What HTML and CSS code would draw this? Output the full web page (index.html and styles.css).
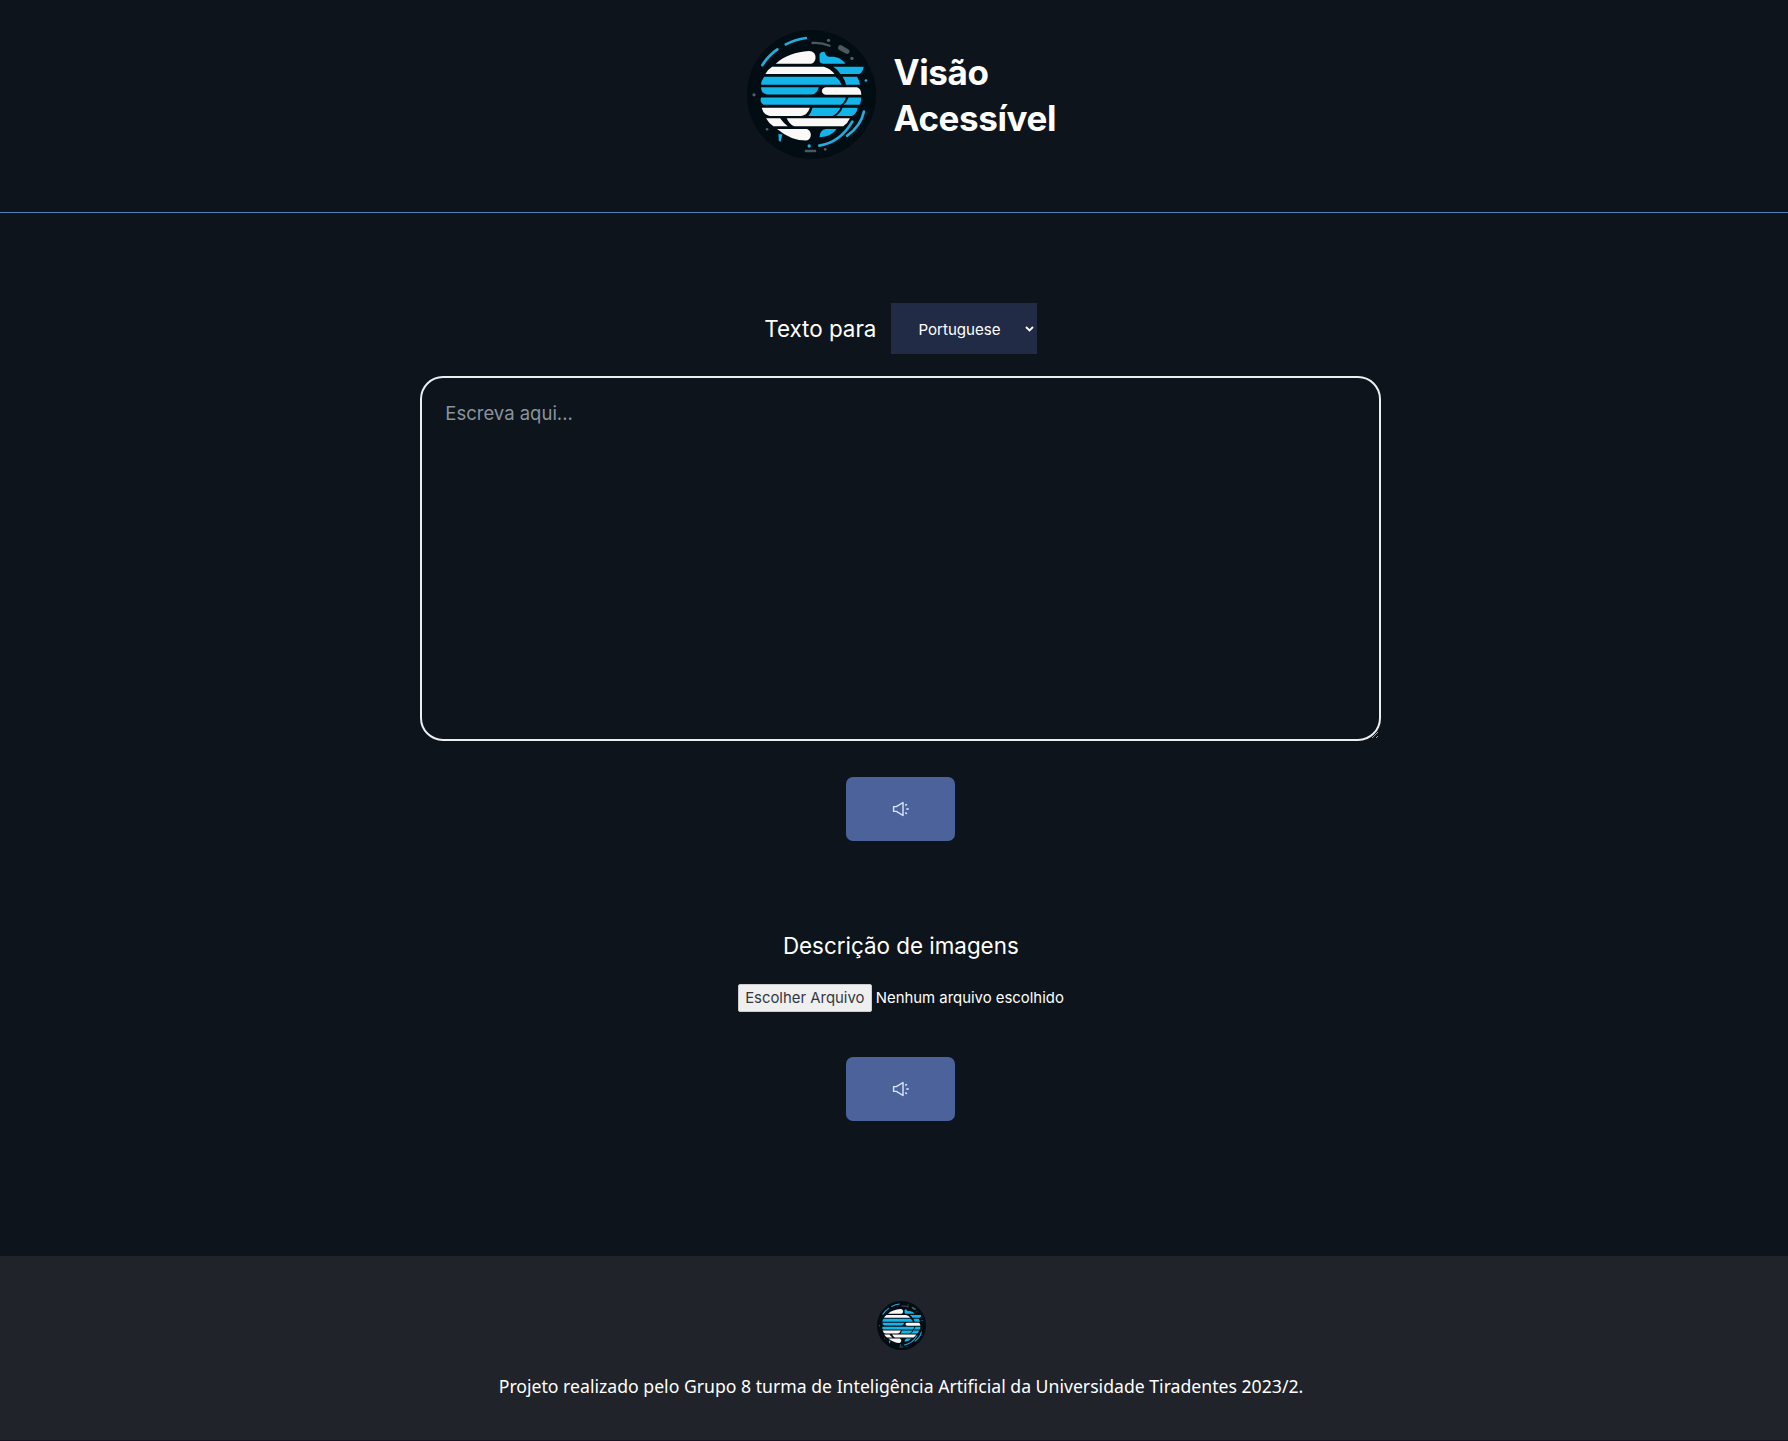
FILE: index.html
```html
<!DOCTYPE html>
<html lang="pt-BR">
<head>
<meta charset="utf-8">
<title>Visão Acessível</title>
<link rel="stylesheet" href="styles.css">
</head>
<body>
<svg class="defs" aria-hidden="true">
  <symbol id="logo" viewBox="23 31 386 386">
    <circle cx="216" cy="224" r="193" fill="#010d13"/>
    <g fill="#fbf9f7">
      <path d="M109 132C133 109 171 96 208 94C222 94 228 103 228 113C228 125 220 132 211 132Z"/>
      <path d="M78 163Q85 149 98 141H253Q273 147 285 163Z"/>
      <path d="M258 202H352Q365 206 365 225H258Q247 222 247 213Q248 204 258 202Z"/>
      <path d="M67 264H211Q204 287 184 288H91Q72 284 67 264Z"/>
      <path d="M80 295H122Q132 309 145 319H102Q88 310 80 295Z"/>
      <path d="M142 295H331Q324 311 311 319H164Q149 312 142 295Z"/>
      <path d="M113 327H203Q214 333 214 345Q213 359 200 362Q155 362 113 327Z"/>
    </g>
    <g fill="#13b5e9">
      <path d="M240 103Q247 94 255 97Q259 111 270 111C291 109 307 117 318 132H251Q239 131 240 121Z"/>
      <path d="M281 141H372Q370 158 359 163H303Q295 150 281 141Z"/>
      <path d="M75 171H288Q301 180 306 195H65Q66 180 75 171Z"/>
      <path d="M309 171H352Q359 182 361 195H319Q317 182 309 171Z"/>
      <path d="M65 202H238Q233 222 216 224H82Q65 220 65 202Z"/>
      <path d="M65 233H319Q314 249 303 255H73Q60 248 65 233Z"/>
      <path d="M327 233H364Q365 249 359 255H312Q322 246 327 233Z"/>
      <path d="M219 264H303Q294 281 279 288H207Q216 278 219 264Z"/>
      <path d="M309 264H354Q351 283 337 288H289Q303 280 309 264Z"/>
      <path d="M240 352Q241 329 259 327H291Q277 349 240 352Z"/>
      <path d="M117 342L129 344L123 366L118 361Z"/>
      <circle cx="209" cy="378" r="5"/><circle cx="379" cy="182" r="4"/>
    </g>
    <g fill="none" stroke="#21aede" stroke-width="8" stroke-linecap="round">
      <path d="M69 136Q86 108 114 89M139 74Q168 59 199 55M239 377Q302 367 338 305M323 347Q364 318 373 275"/>
    </g>
    <g fill="none" stroke="#4b585e" stroke-linecap="round">
      <path stroke-width="7" d="M219 70Q246 68 270 78M199 393H227"/>
      <path stroke-width="15" d="M303 84L322 95"/>
    </g>
    <g fill="#4b6068"><circle cx="267" cy="62" r="5"/><circle cx="337" cy="116" r="5"/><circle cx="44" cy="225" r="5"/><circle cx="83" cy="328" r="4"/><circle cx="257" cy="388" r="4"/></g>
  </symbol>
  <symbol id="horn" viewBox="0 0 18 16">
    <path d="M1.6 5.6H4.4L11 1.5V14.5L4.4 10.4H1.6Z" fill="none" stroke="#dce5ff" stroke-width="1.4" stroke-linejoin="round"/>
    <path d="M13.8 4L14.4 3.6M14.8 8H16.2M13.8 12L14.4 12.4" fill="none" stroke="#dce5ff" stroke-width="1.6" stroke-linecap="round"/>
  </symbol>
</svg>
<header class="header">
  <svg class="header-logo"><use href="#logo"/></svg>
  <h1 class="brand"><span class="brand-top">Visão</span><br><span class="brand-bottom">Acessível</span></h1>
</header>
<main class="main">
  <div class="language">
    <label class="label" for="lang">Texto para</label>
    <div class="select-wrap">
      <select class="select" id="lang"><option>Portuguese</option></select>
      <svg class="chevron" viewBox="0 0 9 6"><path d="M1 1L4.5 4.5L8 1" fill="none" stroke="#fff" stroke-width="1.8"/></svg>
    </div>
  </div>
  <textarea class="textarea" placeholder="Escreva aqui..."></textarea>
  <button class="speak" aria-label="Ouvir texto"><svg class="horn"><use href="#horn"/></svg></button>
  <h2 class="subtitle">Descrição de imagens</h2>
  <div class="file">
    <button class="file-button"><span class="file-label">Escolher Arquivo</span></button>
    <span class="file-name">Nenhum arquivo escolhido</span>
  </div>
  <button class="speak" aria-label="Ouvir descrição"><svg class="horn"><use href="#horn"/></svg></button>
</main>
<footer class="footer">
  <svg class="footer-logo"><use href="#logo"/></svg>
  <p class="credit">Projeto realizado pelo Grupo 8 turma de Inteligência Artificial da Universidade Tiradentes 2023/2.</p>
</footer>
</body>
</html>
```
FILE: styles.css
```css
* { box-sizing: border-box; }
body { margin: 0; background: #0d141c; color: #fff; font-family: Inter, sans-serif; height: 1441px; overflow: hidden; }
button, select, textarea { font-family: inherit; }
.defs { display: none; }
.header { height: 213px; padding: 30px 0 0 14px; display: flex; justify-content: center; align-items: flex-start; gap: 18px; border-bottom: 1px solid #4f86b8; }
.header-logo { width: 129px; height: 129px; }
.brand { margin: 19px 0 0; width: 162px; font-size: 35px; line-height: 46.4px; font-weight: 650; letter-spacing: -0.4px; white-space: nowrap; }
.main { height: 1043px; padding: 90px 0 0 13.6px; display: flex; flex-direction: column; align-items: center; }
.language { display: flex; align-items: center; gap: 15px; height: 51px; }
.label { font-size: 22.4px; line-height: 30px; }
.select-wrap { position: relative; width: 146px; height: 51px; }
.select { appearance: none; width: 100%; height: 100%; border: 0; border-radius: 0; padding: 1px 27px 0; background: #222b45; color: #fff; font-size: 15.1px; }
.chevron { position: absolute; right: 3px; top: 23px; width: 9px; height: 6px; }
.textarea { display: block; margin-top: 22.4px; width: 961px; height: 365px; padding: 22px 23px; border: 2px solid #eceef0; border-radius: 23px; background: transparent; font-size: 18.5px; line-height: 26px; resize: vertical; }
.textarea::placeholder { color: #8a939e; }
.speak { display: flex; align-items: center; justify-content: center; flex: none; width: 109px; height: 64px; margin-top: 35.6px; padding: 0; border: 0; border-radius: 7px; background: #4c629b; }
.horn { width: 18px; height: 16px; }
.subtitle { margin: 90px 0 0; font-size: 22.4px; line-height: 30px; font-weight: 400; }
.file { display: flex; align-items: center; gap: 4px; height: 28px; margin: 23px 0 9.4px; font-size: 14.9px; white-space: nowrap; }
.file-button { width: 134px; height: 28px; padding: 1px 0 0; border: 1px solid #c9ccd0; border-radius: 2px; background: #efefef; color: #33383f; font-size: 14.9px; }
.file-name { padding-top: 1px; }
.footer { height: 185px; padding: 45px 0 0 14px; background: #20232a; border-bottom: 1px solid #171321; display: flex; flex-direction: column; align-items: center; }
.footer-logo { width: 49px; height: 49px; }
.credit { margin: 22px 0 0; font-family: "Noto Sans", sans-serif; font-size: 17.65px; line-height: 28px; white-space: nowrap; }
```
